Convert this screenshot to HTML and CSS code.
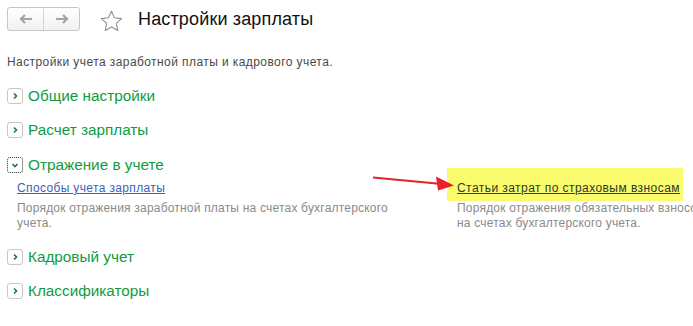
FILE: index.html
```html
<!DOCTYPE html>
<html>
<head>
    <title>Настройки зарплаты</title>
    <meta charset="utf-8">
    <link rel="stylesheet" href="styles.css">
</head>
<body>
    <div class="header">
        <div class="nav">
            <div class="nav-btn">
                <svg width="16" height="12" viewBox="0 0 16 12"><path d="M14 6H3M7 2L3 6l4 4" fill="none" stroke="#a3a3a3" stroke-width="2.2"/></svg>
            </div>
            <div class="nav-btn">
                <svg width="16" height="12" viewBox="0 0 16 12"><path d="M2 6h11M9 2l4 4-4 4" fill="none" stroke="#a3a3a3" stroke-width="2.2"/></svg>
            </div>
        </div>
        <svg class="star" width="23" height="22" viewBox="0 0 23 22"><path d="M11.5 1.2l3 6.6 7.1.8-5.3 4.8 1.5 7.1-6.3-3.6-6.3 3.6 1.5-7.1L1.4 8.6l7.1-.8z" fill="none" stroke="#8f8f8f" stroke-width="1.1" stroke-linejoin="round"/></svg>
        <h1>Настройки зарплаты</h1>
    </div>

    <p class="subtitle">Настройки учета заработной платы и кадрового учета.</p>

    <div class="group">
        <div class="group-head">
            <span class="toggle"><svg width="8" height="8" viewBox="0 0 8 8"><path d="M3 1.5L5.5 4 3 6.5" fill="none" stroke="#1a7a3a" stroke-width="1.6"/></svg></span>
            Общие настройки
        </div>
    </div>

    <div class="group">
        <div class="group-head">
            <span class="toggle"><svg width="8" height="8" viewBox="0 0 8 8"><path d="M3 1.5L5.5 4 3 6.5" fill="none" stroke="#1a7a3a" stroke-width="1.6"/></svg></span>
            Расчет зарплаты
        </div>
    </div>

    <div class="group open">
        <div class="group-head">
            <span class="toggle focused"><svg width="8" height="8" viewBox="0 0 8 8"><path d="M1.5 3L4 5.5 6.5 3" fill="none" stroke="#1a7a3a" stroke-width="1.6"/></svg></span>
            Отражение в учете
        </div>
        <div class="group-body">
            <div class="col col-left">
                <a class="link" href="#">Способы учета зарплаты</a>
                <p class="desc">Порядок отражения заработной платы на счетах бухгалтерского учета.</p>
            </div>
            <div class="col col-right">
                <div class="marker"><a class="link dark" href="#">Статьи затрат по страховым взносам</a></div>
                <p class="desc">Порядок отражения обязательных взносов на счетах бухгалтерского учета.</p>
            </div>
            <svg class="arrow" width="84" height="16" viewBox="0 0 84 16">
                <path d="M1 2.5L70 9" stroke="#e8202a" stroke-width="2.2" fill="none"/>
                <path d="M82 10.5L64 1.5 66 15.5z" fill="#e8202a"/>
            </svg>
        </div>
    </div>

    <div class="group">
        <div class="group-head">
            <span class="toggle"><svg width="8" height="8" viewBox="0 0 8 8"><path d="M3 1.5L5.5 4 3 6.5" fill="none" stroke="#1a7a3a" stroke-width="1.6"/></svg></span>
            Кадровый учет
        </div>
    </div>

    <div class="group">
        <div class="group-head">
            <span class="toggle"><svg width="8" height="8" viewBox="0 0 8 8"><path d="M3 1.5L5.5 4 3 6.5" fill="none" stroke="#1a7a3a" stroke-width="1.6"/></svg></span>
            Классификаторы
        </div>
    </div>
</body>
</html>
```

FILE: styles.css
```css
html {
    overflow: hidden;
}
body {
    font-family: "Liberation Sans", Arial, sans-serif;
    margin: 0;
    padding: 7px;
    background-color: #fff;
    color: #333;
}
.header {
    display: flex;
    align-items: center;
    height: 24px;
}
.nav {
    display: flex;
    width: 73px;
    height: 24px;
    box-sizing: border-box;
    border: 1px solid #c6c6c6;
    border-radius: 3px;
    background: linear-gradient(#ffffff, #f1f1f1);
}
.nav-btn {
    flex: 1;
    display: flex;
    align-items: center;
    justify-content: center;
}
.nav-btn + .nav-btn {
    border-left: 1px solid #d4d4d4;
}
.star {
    margin-left: 20px;
    margin-top: 3px;
}
h1 {
    margin: 0 0 0 15px;
    font-size: 18px;
    font-weight: normal;
    color: #111;
    letter-spacing: 0.15px;
}
.subtitle {
    margin: 24px 0 0;
    font-size: 12px;
    line-height: 15px;
    letter-spacing: 0.42px;
    color: #4a4a4a;
}
.group {
    margin-top: 16px;
}
.subtitle + .group {
    margin-top: 17px;
}
.group-head {
    display: flex;
    align-items: center;
    height: 18px;
    font-size: 15.3px;
    color: #109b3f;
}
.toggle {
    display: flex;
    align-items: center;
    justify-content: center;
    width: 16px;
    height: 16px;
    box-sizing: border-box;
    margin-right: 5px;
    border: 1px solid #c8c8c8;
    border-radius: 3px;
    background: #fff;
}
.toggle.focused {
    border: 1px dotted #333;
}
.group.open {
    margin-top: 17px;
}
.group.open + .group {
    margin-top: 17px;
}
.group-body {
    position: relative;
    display: flex;
    padding-left: 10px;
}
.col-left {
    flex-shrink: 0;
    width: 400px;
    padding-top: 7px;
}
.col-right {
    flex-shrink: 0;
    margin-left: 30px;
    width: 270px;
}
.link {
    display: block;
    font-size: 12px;
    line-height: 15px;
    letter-spacing: 0.36px;
    white-space: nowrap;
    color: #3b5fb8;
    text-decoration: underline;
}
.link.dark {
    letter-spacing: 0.44px;
    color: #2c3a2a;
    text-decoration-color: #1f4d2b;
}
.marker {
    margin-top: -6px;
    width: 236px;
    box-sizing: border-box;
    padding: 13px 10px 5px;
    background: #fbfb6e;
}
.desc {
    margin: 5px 0 0;
    font-size: 12px;
    line-height: 15px;
    letter-spacing: 0.2px;
    color: #8a8a8a;
}
.col-right .desc {
    margin-top: 0;
    padding-left: 10px;
}
.arrow {
    position: absolute;
    left: 365px;
    top: 1px;
}
```
